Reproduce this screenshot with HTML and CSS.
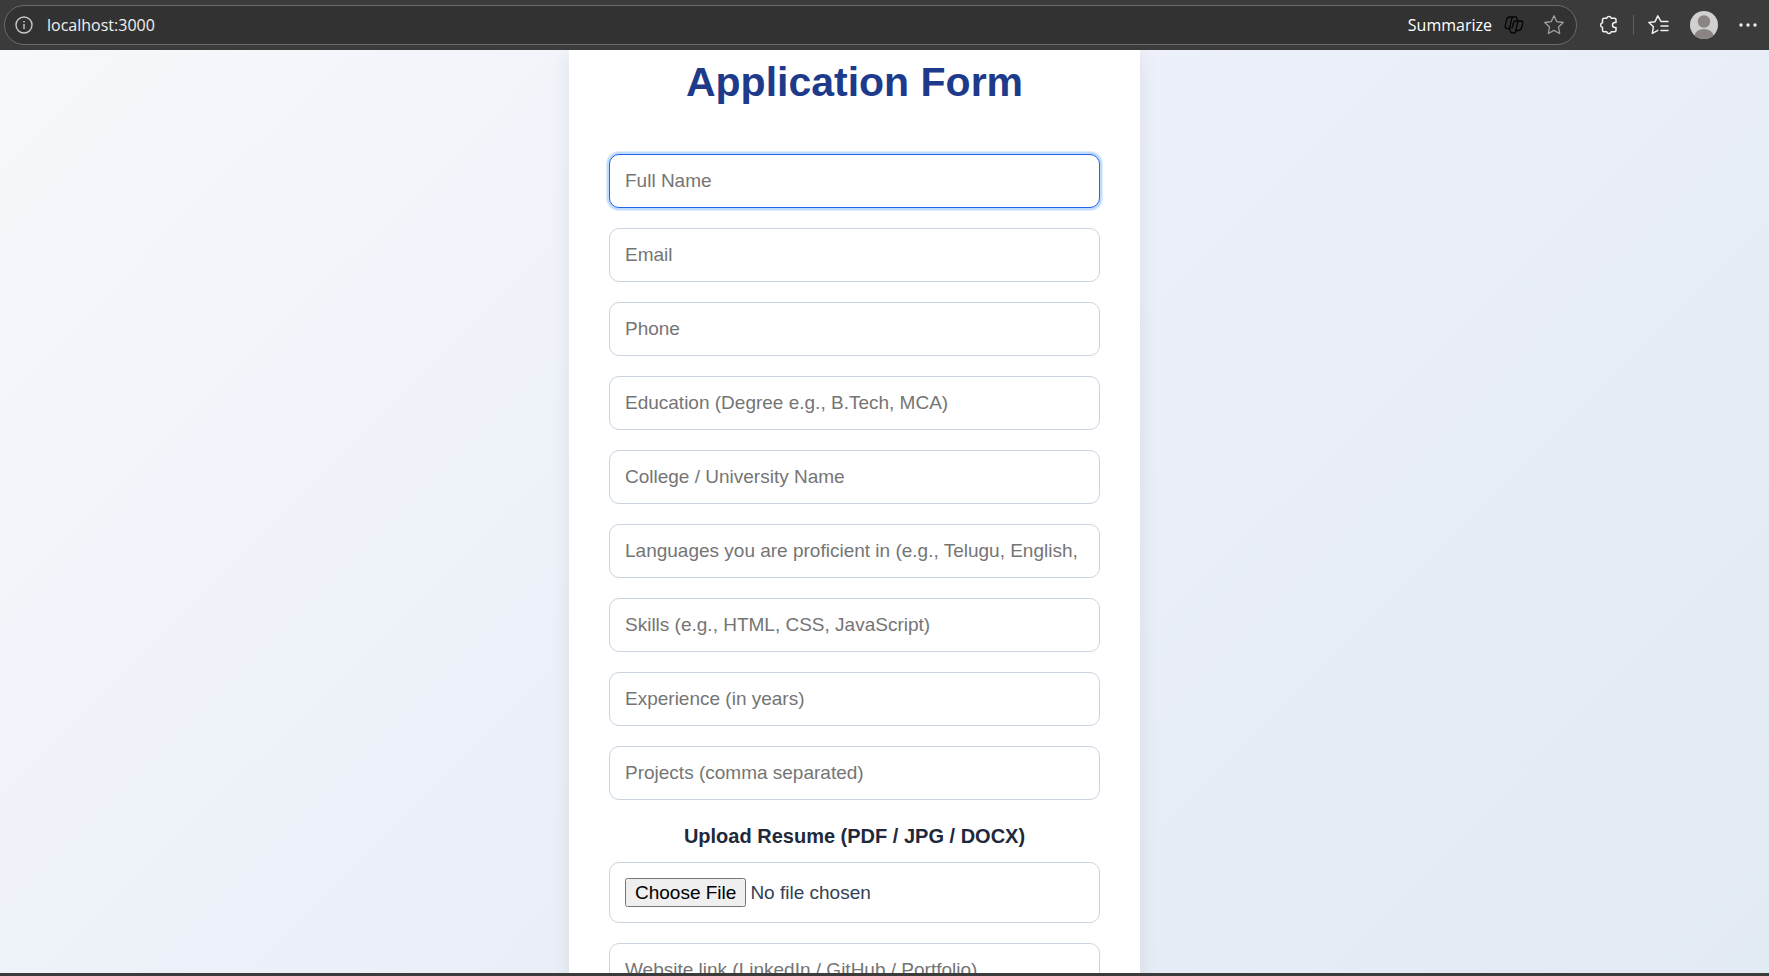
FILE: index.html
```
<!DOCTYPE html>
<html lang="en">
<head>
<meta charset="utf-8">
<title>Application Form</title>
<link rel="stylesheet" href="styles.css">
</head>
<body>
<header class="toolbar">
  <div class="address">
    <button class="icon-btn" aria-label="Site information"><svg width="18" height="18" viewBox="0 0 18 18" fill="none" stroke="#c8c8c8" stroke-width="1.4"><circle cx="9" cy="9" r="8"/><path d="M9 8v5M9 5v1.6"/></svg></button>
    <input class="url" type="text" aria-label="Address" value="localhost:3000">
    <button class="summarize">Summarize
      <svg width="20" height="18" viewBox="0 0 20 18" fill="none" stroke="#050505" stroke-width="1.3" stroke-linejoin="round"><path d="M5.500 1H11q1.800 0 2.200 1.800L13.800 5H16.500Q19.500 5 18.700 8L17.500 12Q16.700 14.500 14.500 14.500H12.500L12 15.500Q11.500 17 9.500 17H8.500Q6.700 17 6.200 15.200L5.500 12.500H3.500Q.5 12.500 1.300 9.500L2.500 4Q3.300 1 5.500 1z"/><path d="M9 1.200Q8 1.500 7.700 3L5.500 12.500M13.800 5H11.500Q10 5 9.600 6.500L7.800 12.500M14.500 5Q13.800 5.500 13.300 7.500L11.500 16"/></svg>
    </button>
    <button class="icon-btn" aria-label="Add to favourites"><svg width="20" height="20" viewBox="0 0 20 20" fill="none" stroke="#a0a0a0" stroke-width="1.3" stroke-linejoin="round"><path d="M10 .8l2.800 5.900 6.400.8-4.700 4.500 1.200 6.500L10 15.400l-5.700 3.100 1.200-6.500L.8 7.500l6.400-.8z"/></svg></button>
  </div>
  <nav class="actions" aria-label="Browser tools">
    <button class="icon-btn" aria-label="Extensions"><svg width="20" height="20" viewBox="0 0 20 20" fill="none" stroke="#f0f0f0" stroke-width="1.500" stroke-linejoin="round"><path d="M5 3.200h2.700a2.400 2.400 0 0 1 4.600 0H15.500q1.500 0 1.500 1.500V7.500h-1a2.500 2.500 0 0 0 0 5h1V15.300q0 1.500-1.500 1.500H12.300a2.400 2.400 0 0 1-4.600 0H5q-1.500 0-1.500-1.500V12.400a2.400 2.400 0 0 1 0-4.700V4.700Q3.500 3.200 5 3.200z"/></svg></button>
    <span class="divider"></span>
    <button class="icon-btn" aria-label="Favourites"><svg width="21" height="20" viewBox="0 0 21 20" fill="none" stroke="#f0f0f0" stroke-width="1.500" stroke-linejoin="round" stroke-linecap="round"><path d="M13 6.500L9.800.9 7 6.700.9 7.500l4.500 4.300-1.100 6.500 5.500-3M13 6.500h7M13 11h7M13 15.500h7"/></svg></button>
    <button class="icon-btn" aria-label="Profile"><svg width="28" height="28" viewBox="0 0 28 28"><defs><clipPath id="face"><circle cx="14" cy="14" r="14"/></clipPath></defs><circle cx="14" cy="14" r="14" fill="#d2d0ce"/><g fill="#8a8583" clip-path="url(#face)"><circle cx="14" cy="10.500" r="6.200"/><ellipse cx="14" cy="25" rx="9.500" ry="7"/></g></svg></button>
    <button class="icon-btn" aria-label="More"><svg width="18" height="4" viewBox="0 0 18 4" fill="#f0f0f0"><circle cx="2" cy="2" r="1.700"/><circle cx="9" cy="2" r="1.700"/><circle cx="16" cy="2" r="1.700"/></svg></button>
  </nav>
</header>
<main class="page">
  <form class="card">
    <h1 class="title">Application Form</h1>
    <input class="field field-active" type="text" aria-label="Full Name" placeholder="Full Name">
    <input class="field" type="email" aria-label="Email" placeholder="Email">
    <input class="field" type="tel" aria-label="Phone" placeholder="Phone">
    <input class="field" type="text" aria-label="Education" placeholder="Education (Degree e.g., B.Tech, MCA)">
    <input class="field" type="text" aria-label="College" placeholder="College / University Name">
    <input class="field" type="text" aria-label="Languages" placeholder="Languages you are proficient in (e.g., Telugu, English,">
    <input class="field" type="text" aria-label="Skills" placeholder="Skills (e.g., HTML, CSS, JavaScript)">
    <input class="field" type="text" aria-label="Experience" placeholder="Experience (in years)">
    <input class="field" type="text" aria-label="Projects" placeholder="Projects (comma separated)">
    <div class="upload">
      <label class="upload-label" for="resume">Upload Resume (PDF / JPG / DOCX)</label>
      <input class="field" id="resume" type="file">
    </div>
    <input class="field" type="url" aria-label="Website" placeholder="Website link (LinkedIn / GitHub / Portfolio)">
  </form>
</main>
</body>
</html>
```
FILE: styles.css
```
* { box-sizing: border-box; }
body {
  margin: 0;
  height: 100vh;
  display: flex;
  flex-direction: column;
  overflow: hidden;
  font-family: "Liberation Sans", Arial, sans-serif;
  border-bottom: 3px solid #3b3b3b;
}
button { font: inherit; color: inherit; background: none; border: 0; padding: 0; }
svg { display: block; }
.toolbar {
  flex: none;
  display: flex;
  align-items: center;
  gap: 22px;
  height: 50px;
  padding: 0 12px 0 4px;
  background: #3b3b3b;
  color: #fff;
  font-family: "Open Sans", "Noto Sans", sans-serif;
  font-size: 16px;
}
.address {
  flex: 1;
  display: flex;
  align-items: center;
  height: 40px;
  padding: 0 12px 0 10px;
  border: 1px solid #6b6b6b;
  border-radius: 20px;
  background: #323232;
}
.url {
  flex: 1;
  min-width: 0;
  margin-left: 14px;
  padding: 0;
  border: 0;
  background: none;
  color: #f0f0f0;
  font: inherit;
}
.summarize { display: flex; align-items: center; gap: 12px; margin-right: 20px; }
.actions { display: flex; align-items: center; gap: 21px; }
.divider { width: 1px; height: 20px; background: #5c5c5c; margin: 0 -7px; }
.page {
  flex: 1;
  min-height: 0;
  overflow: hidden;
  padding-right: 60px;
  background: linear-gradient(135deg, #f6f8fb, #ebeff8 50%, #e2eaf4);
}
.card {
  display: flex;
  flex-direction: column;
  gap: 20px;
  max-width: 571px;
  margin: 0 auto;
  padding: 7px 40px 40px;
  background: #fff;
  box-shadow: 0 4px 20px rgba(0, 0, 0, 0.08);
}
.title {
  margin: 0 0 27px;
  color: #1e3a8a;
  font-size: 41px;
  line-height: 50px;
  text-align: center;
}
.field {
  width: 100%;
  padding: 15px;
  border: 1px solid #cbd5e1;
  border-radius: 10px;
  background: #fff;
  color: #334155;
  font-family: inherit;
  font-size: 19px;
}
.field::placeholder { color: #757575; }
.field::file-selector-button { padding: 2px 8px 1px; }
.field-active, .field:focus {
  outline: none;
  border-color: #2563eb;
  box-shadow: 0 0 0 2px #bfdbfe, 0 0 0 3px #e0edff;
}
.upload { display: flex; flex-direction: column; gap: 10px; }
.upload-label {
  color: #1e293b;
  font-size: 20px;
  font-weight: bold;
  line-height: 32px;
  text-align: center;
}
```
